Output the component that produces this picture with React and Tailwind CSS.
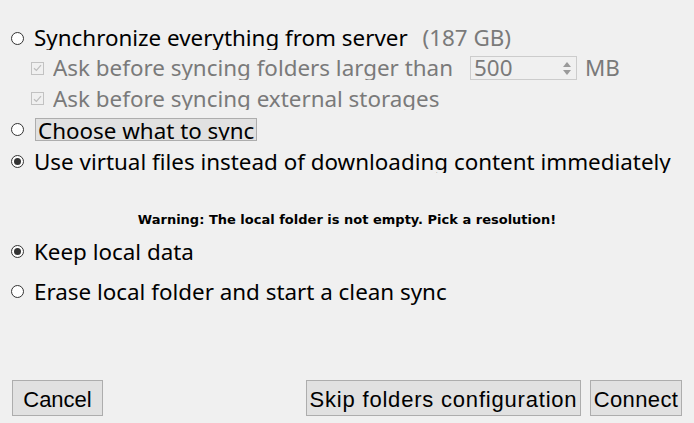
import React from "react";

const main = { fontFamily: '"Noto Sans", "DejaVu Sans", sans-serif' };

function Radio({ checked }) {
  return (
    <span className="flex h-[13px] w-[13px] shrink-0 items-center justify-center rounded-full border border-[#333] bg-white">
      {checked && <span className="h-[7px] w-[7px] rounded-full bg-[#333]" />}
    </span>
  );
}

function Check() {
  return (
    <span className="flex h-[13px] w-[13px] shrink-0 items-center justify-center border border-[#c2c2c2] bg-[#f0f0f0]">
      <svg width="9" height="8" viewBox="0 0 9 8">
        <path d="M1 4.2 L3.4 6.5 L8 1.2" fill="none" stroke="#bdbdbd" strokeWidth="1.2" />
      </svg>
    </span>
  );
}

function Button({ children, className }) {
  return (
    <button
      className={"h-[36px] border border-[#adadad] bg-[#e1e1e1] pt-[3px] text-[22px] leading-none text-black " + className}
      style={{ fontFamily: '"Liberation Sans", Arial, sans-serif' }}
    >
      {children}
    </button>
  );
}

export default function App() {
  return (
    <div className="flex h-[423px] w-[694px] flex-col bg-[#f0f0f0] text-[22.4px] text-black" style={main}>
      <div className="mt-[26px] flex h-[24px] items-center pl-[11px]">
        <Radio />
        <span className="ml-[10px] h-[24px] overflow-hidden leading-[24px]">
          Synchronize everything from server <span className="ml-[9px] text-[#7a7a7a]">(187 GB)</span>
        </span>
      </div>

      <div className="mt-[6px] flex h-[24px] items-center pl-[31px] text-[#7a7a7a]">
        <Check />
        <span className="ml-[9px] h-[24px] overflow-hidden leading-[24px]">Ask before syncing folders larger than</span>
        <span className="ml-[17px] flex h-[24px] w-[107px] items-center border border-[#cccccc] pl-[3px]">
          <span className="flex-1 leading-[22px]">500</span>
          <span className="mr-[2px] flex w-[14px] flex-col items-center gap-[3px]">
            <svg width="8" height="5" viewBox="0 0 8 5"><path d="M0 5 L4 0 L8 5 Z" fill="#9a9a9a" /></svg>
            <svg width="8" height="5" viewBox="0 0 8 5"><path d="M0 0 L4 5 L8 0 Z" fill="#9a9a9a" /></svg>
          </span>
        </span>
        <span className="ml-[8px] leading-[24px]">MB</span>
      </div>

      <div className="mt-[7px] flex h-[23px] items-center pl-[31px] text-[#7a7a7a]">
        <Check />
        <span className="ml-[9px] h-[23px] overflow-hidden leading-[24px]">Ask before syncing external storages</span>
      </div>

      <div className="mt-[8px] flex h-[23px] items-center pl-[11px]">
        <Radio />
        <span className="ml-[11px] h-[23px] overflow-hidden border border-[#adadad] bg-[#e1e1e1] pr-[2px] pl-[2px] leading-[24px]">
          Choose what to sync
        </span>
      </div>

      <div className="mt-[9px] flex h-[23px] items-center pl-[11px]">
        <Radio checked />
        <span className="ml-[10px] h-[23px] overflow-hidden leading-[23px]">
          Use virtual files instead of downloading content immediately
        </span>
      </div>

      <div className="mt-[39px] text-center text-[13px] font-bold leading-[16px]" style={{ fontFamily: '"DejaVu Sans", sans-serif' }}>
        Warning: The local folder is not empty. Pick a resolution!
      </div>

      <div className="mt-[12px] flex h-[23px] items-center pl-[11px]">
        <Radio checked />
        <span className="ml-[10px] leading-[23px]">Keep local data</span>
      </div>

      <div className="mt-[17px] flex h-[23px] items-center pl-[11px]">
        <Radio />
        <span className="ml-[10px] leading-[23px]">Erase local folder and start a clean sync</span>
      </div>

      <div className="mt-auto mb-[7px] flex items-center px-[12px]">
        <Button className="w-[91px]">Cancel</Button>
        <div className="flex-1" />
        <Button className="w-[275px] tracking-[0.8px]">Skip folders configuration</Button>
        <Button className="ml-[9px] w-[92px] tracking-[0.4px]">Connect</Button>
      </div>
    </div>
  );
}
